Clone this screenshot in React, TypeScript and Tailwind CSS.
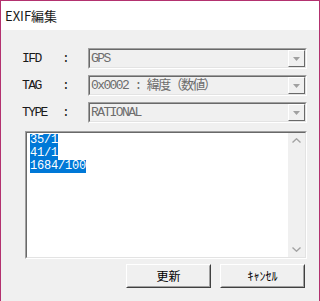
import { useState } from 'react';

const mono = '"Liberation Mono", "Noto Sans CJK JP", monospace';
const jp = '"Noto Sans CJK JP", "Noto Sans", sans-serif';

function Combo({ label, value }: { label: string; value: string }) {
  return (
    <div className="flex items-center h-[21px]">
      <span className="w-[40px] tracking-[-1.6px]">{label}</span>
      <span className="w-[26px] tracking-[-1.6px]">:</span>
      {/* sunken, disabled combobox */}
      <div className="flex-1 h-full border border-t-[#a0a0a0] border-l-[#a0a0a0] border-b-white border-r-white">
        <div className="flex h-full border border-t-[#696969] border-l-[#696969] border-b-[#e3e3e3] border-r-[#e3e3e3] bg-[#f0f0f0]">
          <span className="flex-1 pl-[1px] leading-[17px] text-[#6d6d6d] tracking-[-1.6px] whitespace-nowrap overflow-hidden">
            {value}
          </span>
          <div className="w-[17px] h-full flex items-center justify-center border border-t-white border-l-white border-b-[#696969] border-r-[#696969] bg-[#f0f0f0]">
            <svg width="7" height="4" viewBox="0 0 7 4">
              <path d="M0 0h7L3.5 4z" fill="#a0a0a0" />
            </svg>
          </div>
        </div>
      </div>
    </div>
  );
}

export default function App() {
  const [values] = useState(['35/1', '41/1', '1684/100']);

  return (
    <div className="w-[320px] h-[301px] flex flex-col border-x border-t border-[#b3316f] bg-[#f0f0f0] overflow-hidden">
      {/* Title bar */}
      <div className="h-[29px] bg-white flex items-center pl-[4px] text-[13px] text-[#1a1a1a]" style={{ fontFamily: jp }}>
        EXIF編集
      </div>

      <div className="flex-1 flex flex-col pt-[18px] pl-[21px] pr-[12px] text-[13px] text-[#1a1a1a]" style={{ fontFamily: mono }}>
        <div className="flex flex-col gap-[6px]">
          <Combo label="IFD" value="GPS" />
          <Combo label="TAG" value="0x0002 : 緯度（数値）" />
          <Combo label="TYPE" value="RATIONAL" />
        </div>

        {/* Value edit box */}
        <div className="mt-[8px] ml-[3px] h-[128px] border border-t-[#a0a0a0] border-l-[#a0a0a0] border-b-white border-r-white">
          <div className="flex h-full border border-t-[#696969] border-l-[#696969] border-b-[#e3e3e3] border-r-[#e3e3e3] bg-white">
            <div className="flex-1 flex flex-col items-start pt-[1px] pl-[3px] text-[12px]">
              {values.map((v) => (
                <span key={v} className="h-[13px] leading-[13px] bg-[#0078d7] text-white tracking-[-0.2px]">
                  {v}
                </span>
              ))}
            </div>
            <div className="w-[17px] bg-[#f0f0f0] flex flex-col justify-between items-center py-[5px]">
              <svg width="9" height="5" viewBox="0 0 9 5">
                <path d="M0.5 4.5L4.5 0.8L8.5 4.5" stroke="#a3a3a3" strokeWidth="1.4" fill="none" />
              </svg>
              <svg width="9" height="5" viewBox="0 0 9 5">
                <path d="M0.5 0.5L4.5 4.2L8.5 0.5" stroke="#a3a3a3" strokeWidth="1.4" fill="none" />
              </svg>
            </div>
          </div>
        </div>

        {/* Buttons */}
        <div className="mt-[5px] flex justify-end gap-[9px] pr-[2px]" style={{ fontFamily: jp }}>
          {['更新', 'ｷｬﾝｾﾙ'].map((t) => (
            <button
              key={t}
              className="w-[85px] h-[24px] border border-t-white border-l-white border-b-[#404040] border-r-[#404040] bg-[#f0f0f0] text-[12px] text-black"
            >
              <div className="h-full flex items-center justify-center border border-t-[#f0f0f0] border-l-[#f0f0f0] border-b-[#a0a0a0] border-r-[#a0a0a0]">
                {t}
              </div>
            </button>
          ))}
        </div>
      </div>
    </div>
  );
}
